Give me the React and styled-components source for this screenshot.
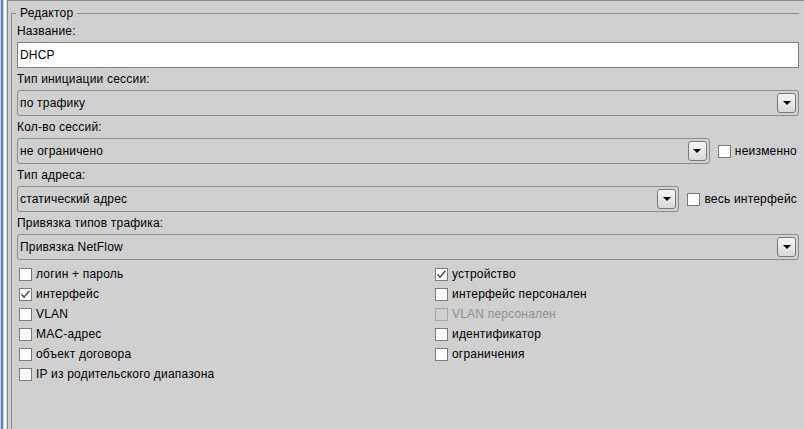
import React from "react";
import styled, { createGlobalStyle } from "styled-components";

const GlobalStyle = createGlobalStyle`
  html, body { margin: 0; padding: 0; background: #d0d0d0; overflow: hidden; }
  body { font-family: "Liberation Sans", Arial, sans-serif; font-size: 12px; color: #000; letter-spacing: 0.2px; }
  * { box-sizing: border-box; }
`;

const Screen = styled.div`
  display: flex;
  width: 804px;
  height: 429px;
  overflow: hidden;
  background: #d0d0d0;
`;

const SideStrip = styled.div`
  flex: 0 0 7px;
  background: linear-gradient(
    to right,
    #d0d0d0 0 1px,
    #5c86cc 1px 3px,
    #d0d0d0 3px 4px,
    #ffffff 4px 6px,
    #d0d0d0 6px 7px
  );
`;

const OuterPanel = styled.div`
  flex: 1;
  min-width: 0;
  border-left: 1px solid #8c8c8c;
  border-top: 1px solid #8c8c8c;
  padding: 12px 0 0 3px;
`;

const Frame = styled.section`
  position: relative;
  box-sizing: content-box;
  width: 782px;
  height: 430px;
  border-top: 1px solid #8c8c8c;
  border-left: 1px solid #8c8c8c;
  padding: 6px 0 0 5px;
`;

const Legend = styled.div`
  position: absolute;
  top: -8px;
  left: 4px;
  padding: 0 4px 0 4px;
  line-height: 15px;
  background: #d0d0d0;
`;

const Label = styled.div`
  line-height: 16px;
  padding: 3px 0 3px 0;
  height: 22px;
  white-space: nowrap;
`;

const TextField = styled.input`
  display: block;
  width: 100%;
  height: 26px;
  margin: 0;
  border: 1px solid #7f7f7f;
  background: #fff;
  padding: 0 2px;
  font: inherit;
  letter-spacing: inherit;
  color: #000;
  outline: none;
`;

const Row = styled.div`
  display: flex;
  align-items: center;
  gap: 8px;
`;

const Combo = styled.div`
  flex: 1;
  min-width: 0;
  display: flex;
  align-items: center;
  height: 26px;
  border: 1px solid #8c8c8c;
  border-radius: 3px;
  padding: 2px;
  background: #d0d0d0;
`;

const ComboText = styled.span`
  flex: 1;
  white-space: nowrap;
  overflow: hidden;
`;

const ArrowButton = styled.span`
  flex: 0 0 19px;
  height: 20px;
  display: flex;
  align-items: center;
  justify-content: center;
  border: 1px solid #7a7a7a;
  border-radius: 3px;
  background: linear-gradient(to bottom, #f6f6f6, #d8d8d8);
`;

const CheckGrid = styled.div`
  display: grid;
  grid-template-columns: 416px 1fr;
  grid-auto-rows: 20px;
  padding-left: 2px;
  margin-top: 4px;
`;

const CheckItem = styled.label`
  display: flex;
  align-items: center;
  gap: 4px;
  height: 20px;
  white-space: nowrap;
  color: ${(p) => (p.$disabled ? "#8e8e8e" : "#000")};
  padding-right: ${(p) => (p.$trail ? "2px" : "0")};
`;

const Box = styled.span`
  flex: 0 0 13px;
  width: 13px;
  height: 13px;
  border: 1px solid ${(p) => (p.$disabled ? "#a6a6a6" : "#7a7a7a")};
  background: ${(p) => (p.$disabled ? "transparent" : "#fff")};
  display: flex;
  align-items: center;
  justify-content: center;
`;

function Arrow() {
  return (
    <svg width="8" height="4" viewBox="0 0 8 4">
      <polygon points="0,0 8,0 4,4" fill="#000" />
    </svg>
  );
}

function ComboBox({ value }) {
  return (
    <Combo>
      <ComboText>{value}</ComboText>
      <ArrowButton>
        <Arrow />
      </ArrowButton>
    </Combo>
  );
}

function Check({ label, checked, disabled, trail }) {
  return (
    <CheckItem $disabled={disabled} $trail={trail}>
      <Box $disabled={disabled}>
        {checked && (
          <svg width="11" height="11" viewBox="0 0 11 11">
            <path d="M1.5 5.2 L4 8.2 L9.5 1.8" fill="none" stroke="#5a5a5a" strokeWidth="1.7" />
          </svg>
        )}
      </Box>
      {label}
    </CheckItem>
  );
}

const checks = [
  { label: "логин + пароль" },
  { label: "устройство", checked: true },
  { label: "интерфейс", checked: true },
  { label: "интерфейс персонален" },
  { label: "VLAN" },
  { label: "VLAN персонален", disabled: true },
  { label: "MAC-адрес" },
  { label: "идентификатор" },
  { label: "объект договора" },
  { label: "ограничения" },
  { label: "IP из родительского диапазона" },
];

export default function App() {
  return (
    <>
      <GlobalStyle />
      <Screen>
        <SideStrip />
        <OuterPanel>
          <Frame>
            <Legend>Редактор</Legend>
            <Label>Название:</Label>
            <TextField defaultValue="DHCP" readOnly />
            <Label>Тип инициации сессии:</Label>
            <ComboBox value="по трафику" />
            <Label>Кол-во сессий:</Label>
            <Row>
              <ComboBox value="не ограничено" />
              <Check label="неизменно" trail />
            </Row>
            <Label>Тип адреса:</Label>
            <Row>
              <ComboBox value="статический адрес" />
              <Check label="весь интерфейс" trail />
            </Row>
            <Label>Привязка типов трафика:</Label>
            <ComboBox value="Привязка NetFlow" />
            <CheckGrid>
              {checks.map((c) => (
                <Check key={c.label} {...c} />
              ))}
            </CheckGrid>
          </Frame>
        </OuterPanel>
      </Screen>
    </>
  );
}
